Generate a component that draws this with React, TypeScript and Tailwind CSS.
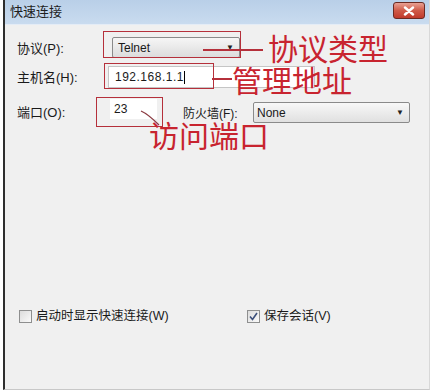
export default function App() {
    return (
        <div className="w-[436px] h-[392px] bg-white relative overflow-hidden" style={{ fontFamily: '"Liberation Sans", "Noto Sans CJK SC", sans-serif' }}>
            <div className="ml-[3px] mr-[6px] h-[390px] border-l-[2px] border-[#2e2e2e] flex flex-col bg-[#f0f0f0] border-b border-b-[#c8c8c8] border-r border-r-[#d8d8d8]">
                {/* Title bar */}
                <div className="h-[25px] flex items-center justify-between bg-gradient-to-b from-[#b9cfe8] to-[#c9dbef] pl-[5px] pr-[4px] border-b border-[#e4ecf6]">
                    <span className="text-[13px] text-[#1e1e1e]">快速连接</span>
                    <div className="w-[32px] h-[17px] rounded-[3px] border border-[#6b2a22] bg-gradient-to-b from-[#e8a093] via-[#cf5a48] to-[#c0392b] flex items-center justify-center mb-[3px]">
                        <svg width="12" height="10" viewBox="0 0 12 10">
                            <path d="M2 1.5 L10 8.5 M10 1.5 L2 8.5" stroke="#fff" strokeWidth="2.4" strokeLinecap="round" />
                        </svg>
                    </div>
                </div>

                {/* Form */}
                <div className="flex flex-col pt-[12px] text-[13px] text-[#1a1a1a]">
                    <div className="flex items-center h-[21px]">
                        <span className="w-[107px] pl-[12px] mt-[2px]">协议(P):</span>
                        <div className="w-[128px] h-[21px] border border-[#8a8a8a] rounded-[2px] bg-gradient-to-b from-[#f6f6f6] to-[#dcdcdc] flex items-center justify-between pl-[5px] pr-[5px] text-[12px]">
                            <span>Telnet</span>
                            <span className="text-[8px] text-[#222]">▼</span>
                        </div>
                    </div>

                    <div className="flex items-center h-[22px] mt-[8px]">
                        <span className="w-[103px] pl-[12px] mt-[2px]">主机名(H):</span>
                        <div className="w-[207px] h-[22px] border border-[#c5c5c5] bg-white flex items-center pl-[6px] tracking-[0.5px] text-[12px]">
                            <span>192.168.1.1</span>
                            <span className="w-px h-[13px] bg-black"></span>
                        </div>
                    </div>

                    <div className="flex items-start h-[24px] mt-[11px]">
                        <span className="w-[105px] pl-[12px] mt-[4px]">端口(O):</span>
                        <div className="w-[47px] h-[20px] bg-white flex items-center pl-[4px] text-[12px]">
                            <span>23</span>
                        </div>
                        <span className="ml-[26px] w-[70px] text-[12px] mt-[6px]">防火墙(F):</span>
                        <div className="w-[157px] h-[21px] mt-[3px] border border-[#8a8a8a] rounded-[2px] bg-gradient-to-b from-[#f8f8f8] to-[#e0e0e0] flex items-center justify-between pl-[3px] pr-[5px] text-[12px]">
                            <span>None</span>
                            <span className="text-[8px] text-[#222]">▼</span>
                        </div>
                    </div>
                </div>

                {/* Options */}
                <div className="flex items-center mt-[184px] text-[12.5px] text-[#1a1a1a] pl-[14px]">
                    <div className="flex items-center w-[228px]">
                        <span className="w-[13px] h-[13px] border border-[#8e8f8f] bg-gradient-to-br from-[#dcdcdc] to-[#fafafa] mr-[4px]"></span>
                        <span>启动时显示快速连接(W)</span>
                    </div>
                    <div className="flex items-center">
                        <span className="w-[13px] h-[13px] border border-[#8e8f8f] bg-gradient-to-br from-[#dcdcdc] to-[#fafafa] mr-[4px] flex items-center justify-center">
                            <svg width="9" height="9" viewBox="0 0 9 9">
                                <path d="M1 4.5 L3.5 7.5 L8 1" stroke="#3b4f7a" strokeWidth="1.6" fill="none" />
                            </svg>
                        </span>
                        <span>保存会话(V)</span>
                    </div>
                </div>
            </div>

            {/* Red annotations */}
            <div className="absolute left-[103px] top-[31px] w-[138px] h-[27px] border-[1.5px] border-[#b5303b]"></div>
            <div className="absolute left-[203px] top-[49px] w-[60px] h-[1.5px] bg-[#b5303b]"></div>
            <span className="absolute left-[268px] top-[29px] text-[30px] leading-[36px] text-[#c8242f]" style={{ fontFamily: '"Noto Sans CJK SC", sans-serif' }}>协议类型</span>

            <div className="absolute left-[104px] top-[63px] w-[110px] h-[26px] border-[1.5px] border-[#b5303b]"></div>
            <div className="absolute left-[212px] top-[78px] w-[20px] h-[1.5px] bg-[#b5303b]"></div>
            <span className="absolute left-[232px] top-[61px] text-[30px] leading-[36px] text-[#c8242f]" style={{ fontFamily: '"Noto Sans CJK SC", sans-serif' }}>管理地址</span>

            <div className="absolute left-[96px] top-[97px] w-[67px] h-[30px] border-[1.5px] border-[#b5303b]"></div>
            <svg className="absolute left-[138px] top-[108px]" width="26" height="22" viewBox="0 0 26 22">
                <path d="M3 3 Q10 6 21 17" stroke="#8a3a40" strokeWidth="1.2" fill="none" />
            </svg>
            <span className="absolute left-[149px] top-[116px] text-[30px] leading-[36px] text-[#c8242f]" style={{ fontFamily: '"Noto Sans CJK SC", sans-serif' }}>访问端口</span>
        </div>
    )
}
